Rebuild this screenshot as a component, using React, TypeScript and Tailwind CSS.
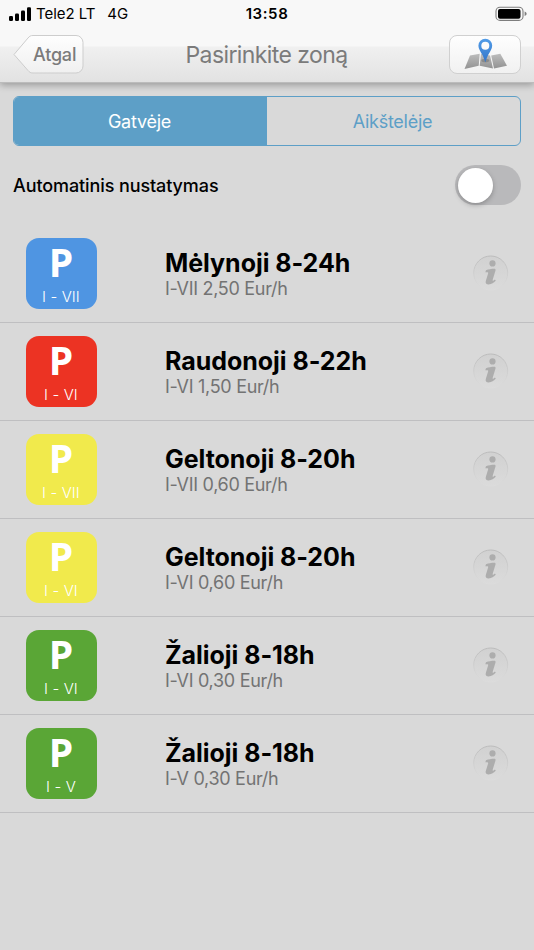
import { useState } from 'react';

interface Zone {
  id: number;
  name: string;
  price: string;
  range: string;
  tile: string;
}

const zones: Zone[] = [
  { id: 1, name: 'Mėlynoji 8-24h', price: 'I-VII 2,50 Eur/h', range: 'I - VII', tile: 'bg-[#4f95e2]' },
  { id: 2, name: 'Raudonoji 8-22h', price: 'I-VI 1,50 Eur/h', range: 'I - VI', tile: 'bg-[#ec3323]' },
  { id: 3, name: 'Geltonoji 8-20h', price: 'I-VII 0,60 Eur/h', range: 'I - VII', tile: 'bg-[#f1ea4c]' },
  { id: 4, name: 'Geltonoji 8-20h', price: 'I-VI 0,60 Eur/h', range: 'I - VI', tile: 'bg-[#f1ea4c]' },
  { id: 5, name: 'Žalioji 8-18h', price: 'I-VI 0,30 Eur/h', range: 'I - VI', tile: 'bg-[#5aa636]' },
  { id: 6, name: 'Žalioji 8-18h', price: 'I-V 0,30 Eur/h', range: 'I - V', tile: 'bg-[#5aa636]' },
];

function StatusBar() {
  return (
    <div className="grid h-7 grid-cols-3 items-center pl-[9px] pr-[7px] text-black">
      <div className="flex items-center text-[15px] leading-7">
        <svg width="23" height="14" viewBox="0 0 23 14" className="mr-[4px] shrink-0">
          <rect x="0" y="9" width="4" height="5" rx="1.2" />
          <rect x="6" y="6.5" width="4" height="7.5" rx="1.2" />
          <rect x="12" y="3.5" width="4" height="10.5" rx="1.2" />
          <rect x="18" y="0.3" width="4" height="13.7" rx="1.2" />
        </svg>
        <span className="whitespace-nowrap tracking-[-0.05px]">Tele2 LT</span>
        <span className="ml-[12px]">4G</span>
      </div>
      <span className="pr-[2px] text-center text-[15px] font-semibold leading-7 tracking-[0.6px]">13:58</span>
      <svg width="32" height="16" viewBox="0 0 32 16" className="justify-self-end">
        <rect x="1" y="1.2" width="27" height="13.2" rx="4" fill="none" stroke="#7d7d7d" strokeWidth="1.1" />
        <rect x="3" y="3" width="22.5" height="9.8" rx="2" />
        <path d="M29.6 5.5c1.4.5 2 1.300 2 2.300s-.6 1.800-2 2.300z" fill="#7d7d7d" />
      </svg>
    </div>
  );
}

function MapIcon() {
  return (
    <svg width="44" height="32" viewBox="0 0 44 32">
      <defs>
        <linearGradient id="map" x1="0" y1="0" x2="0" y2="1">
          <stop offset="0" stopColor="#bdbdbd" />
          <stop offset="1" stopColor="#929292" />
        </linearGradient>
        <linearGradient id="pin" x1="0" y1="0" x2="0" y2="1">
          <stop offset="0" stopColor="#519ce8" />
          <stop offset="1" stopColor="#3375c9" />
        </linearGradient>
      </defs>
      <path d="M7 17.500 16.700 15.700 15.700 27.700 1.500 31Z" fill="url(#map)" />
      <path d="M18 15.800 27 17.500 30 30.500 16.700 27.700Z" fill="url(#map)" />
      <path d="M28.200 17.500 37.300 15.800 44 27.700 31 30.500Z" fill="url(#map)" />
      <ellipse cx="22.300" cy="22.500" rx="4" ry="1.800" fill="#777" opacity=".6" />
      <path
        d="M22.300.8a6.900 6.900 0 0 0-6.900 7c0 3.100 2.300 6 4.100 9.300 1.100 2.100 1.800 4.700 2.800 7.300 1-2.600 1.700-5.200 2.800-7.300 1.800-3.300 4.100-6.200 4.100-9.300A6.900 6.900 0 0 0 22.300.8Zm0 3a4 4 0 1 1 0 8 4 4 0 0 1 0-8Z"
        fill="url(#pin)"
        fillRule="evenodd"
      />
    </svg>
  );
}

function Header() {
  return (
    <header className="relative h-[83px] border-b border-[#bcbcbc] bg-[linear-gradient(#f8f8f8_0px,#f8f8f8_46px,#f0f0f0_47px,#e2e2e2_82px)] shadow-[0_2px_7px_rgba(0,0,0,0.3)]">
      <StatusBar />
      <div className="flex items-center justify-between px-[13px] pt-[7px]">
        <button className="relative h-[39px] w-[71px] pl-[20px] text-left text-[18px] font-medium leading-[38px] tracking-[-0.2px] text-[#7b7b7b]">
          <svg width="71" height="39" viewBox="0 0 71 39" className="absolute left-0 top-0">
            <defs>
              <linearGradient id="back" x1="0" y1="0" x2="0" y2="1">
                <stop offset="0" stopColor="#fefefe" />
                <stop offset="1" stopColor="#f0f0f0" />
              </linearGradient>
            </defs>
            <path
              d="M20 .5H63a7 7 0 0 1 7 7V31a7 7 0 0 1-7 7H20c-2.500 0-3.500-.8-5-2.500L1 19.500 15 3C16.500 1.300 17.500.5 20 .5Z"
              fill="url(#back)"
              stroke="#cdcdcd"
            />
          </svg>
          <span className="relative">Atgal</span>
        </button>
        <h1 className="text-[23px] leading-[38px] tracking-[-0.6px] text-[#7b7b7b]">Pasirinkite zoną</h1>
        <button className="flex h-[39px] w-[72px] items-start justify-center rounded-[8px] border border-[#d0d0d0] bg-linear-to-b from-[#fefefe] to-[#f1f1f1] pt-[2px]">
          <MapIcon />
        </button>
      </div>
    </header>
  );
}

function InfoIcon() {
  return (
    <svg width="36" height="36" viewBox="0 0 36 36">
      <defs>
        <linearGradient id="ring" x1="0" y1="0" x2="0" y2="1">
          <stop offset="0" stopColor="#bbbbbb" />
          <stop offset=".5" stopColor="#cecece" />
          <stop offset="1" stopColor="#dcdcdc" />
        </linearGradient>
        <linearGradient id="disc" x1="0" y1="0" x2="0" y2="1">
          <stop offset="0" stopColor="#d1d1d1" />
          <stop offset="1" stopColor="#dbdbdb" />
        </linearGradient>
      </defs>
      <circle cx="17.700" cy="18" r="17" fill="url(#disc)" stroke="url(#ring)" />
      <circle cx="19.500" cy="8.400" r="3.100" fill="#adadad" />
      <path
        d="M13 15.200C15.500 14.200 18.300 13.700 21.200 13.700c1.200 0 1.600.7 1.300 1.700L19.700 24.800c-.3 1 .2 1.200.9.700l1.300-.9.900 1c-1.700 2.300-4.300 3.900-7.100 3.900-2.600 0-3.500-1.500-2.900-3.500l2.300-7.400c.3-1-.1-1.400-.9-1.400H12.300z"
        fill="#adadad"
      />
    </svg>
  );
}

function ZoneRow({ zone }: { zone: Zone }) {
  return (
    <li className="flex h-[98px] items-start border-b border-[#bfbfc1] pl-[26px] pr-[25px]">
      <div className={`mt-[13px] flex h-[71px] w-[71px] flex-col items-center rounded-[13px] text-white ${zone.tile}`}>
        <span className="mt-[1px] pr-[1px] font-['Open_Sans',sans-serif] text-[39px] font-bold leading-[46px]">P</span>
        <span className="mt-[2px] pr-[1px] text-[15px] font-light leading-[20px] tracking-[0.1px]">{zone.range}</span>
      </div>
      <div className="ml-[68px] mt-[22px] flex-1">
        <h2 className="text-[25px] font-bold leading-[32px] tracking-[-0.04px] text-black">{zone.name}</h2>
        <p className="text-[18px] leading-[20px] tracking-[-0.3px] text-[#737373]">{zone.price}</p>
      </div>
      <button className="mt-[30px]">
        <InfoIcon />
      </button>
    </li>
  );
}

export default function App() {
  const [tab, setTab] = useState('street');
  const [auto, setAuto] = useState(false);

  return (
    <div className="min-h-[950px] bg-[#d9d9d9] font-['Inter',sans-serif]">
      <Header />
      <main>
        <div className="mx-[13px] mt-[13px] flex h-[50px] overflow-hidden rounded-[6px] border border-[#5d9fc7] text-[18px] tracking-[-0.25px]">
          <button
            onClick={() => setTab('street')}
            className={`flex-1 pr-[2px] ${tab === 'street' ? 'bg-[#5d9fc7] text-white' : 'text-[#5d9fc7]'}`}
          >
            Gatvėje
          </button>
          <button
            onClick={() => setTab('lot')}
            className={`flex-1 pr-[2px] ${tab === 'lot' ? 'bg-[#5d9fc7] text-white' : 'text-[#5d9fc7]'}`}
          >
            Aikštelėje
          </button>
        </div>
        <div className="mb-px flex h-[78px] items-center justify-between px-[13px]">
          <span className="text-[18px] font-medium tracking-[-0.1px] text-black">Automatinis nustatymas</span>
          <button
            onClick={() => setAuto(!auto)}
            className={`flex h-[40px] w-[66px] items-center rounded-full px-[3px] ${auto ? 'justify-end bg-[#5d9fc7]' : 'bg-[#b9b9bb]'}`}
          >
            <span className="h-[35px] w-[35px] rounded-full bg-white shadow-[0_2px_5px_rgba(0,0,0,0.25)]" />
          </button>
        </div>
        <ul>
          {zones.map((zone) => (
            <ZoneRow key={zone.id} zone={zone} />
          ))}
        </ul>
      </main>
    </div>
  );
}
